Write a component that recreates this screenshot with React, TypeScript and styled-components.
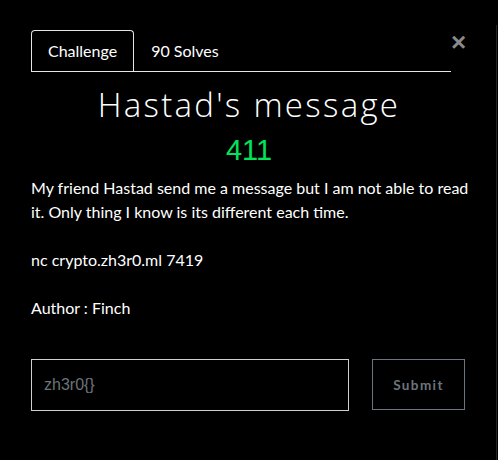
import React from "react";
import styled, { createGlobalStyle } from "styled-components";

const Global = createGlobalStyle`
  html, body { margin: 0; padding: 0; background: #000; }
  body { font-family: Lato, "Noto Sans", sans-serif; color: #fff; }
`;

const Page = styled.div`
  width: 498px;
  height: 460px;
  background: #000;
  overflow: hidden;
  padding-top: 25px;
  box-sizing: border-box;
`;

const Modal = styled.div`
  width: 497px;
  height: 435px;
  border-right: 1px solid #262626;
  box-sizing: border-box;
  padding: 5px 0 0 31px;
`;

const Header = styled.div`
  display: flex;
  align-items: flex-start;
  width: 436px;
`;

const Nav = styled.nav`
  display: flex;
  width: 420px;
  border-bottom: 1px solid #e6e6e6;
`;

const Tab = styled.div<{ $active?: boolean }>`
  box-sizing: border-box;
  height: 41px;
  padding: 8px 16px 0;
  font-size: 16px;
  line-height: 24px;
  color: #fff;
  border: 1px solid ${(p) => (p.$active ? "#e6e6e6" : "transparent")};
  border-bottom: 0;
  border-radius: 4px 4px 0 0;
`;

const Close = styled.button`
  padding: 0;
  margin-top: 1px;
  width: 14px;
  height: 22px;
  border: 0;
  background: none;
  color: #8a8a8a;
  font-family: "Liberation Sans", Arial, sans-serif;
  font-weight: 700;
  font-size: 26px;
  line-height: 22px;
  text-align: center;
`;

const Body = styled.div`
  width: 436px;
`;

const Title = styled.h3`
  margin: 13px 0 0;
  text-align: center;
  font-family: "Open Sans", sans-serif;
  font-weight: 300;
  font-size: 33px;
  letter-spacing: 2.3px;
  line-height: 40px;
  color: #fff;
`;

const Value = styled.div`
  margin-top: 7px;
  text-align: center;
  font-family: "Liberation Sans", Arial, sans-serif;
  font-size: 29px;
  line-height: 36px;
  color: #00e35b;
`;

const Description = styled.div`
  width: 450px;
  margin-top: 8px;
  font-size: 16px;
  line-height: 24px;
  color: #fff;
`;

const Form = styled.form`
  display: flex;
  gap: 23px;
  margin-top: 39px;
`;

const Input = styled.input`
  box-sizing: border-box;
  width: 318px;
  height: 52px;
  padding: 0 12px;
  background: #000;
  border: 1px solid #d0d0d0;
  border-radius: 0;
  color: #fff;
  font-family: "Liberation Sans", Arial, sans-serif;
  font-size: 16px;
  outline: none;
  &::placeholder { color: #6c737a; }
`;

const Submit = styled.button`
  box-sizing: border-box;
  width: 93px;
  height: 51px;
  background: #000;
  border: 1px solid #6c757d;
  border-radius: 0;
  color: #6c757d;
  font-family: Lato, sans-serif;
  font-weight: 700;
  font-size: 13.5px;
  letter-spacing: 1.4px;
  padding: 0;
`;

export default function App() {
  return (
    <>
      <Global />
      <Page>
        <Modal>
          <Header>
            <Nav>
              <Tab $active>Challenge</Tab>
              <Tab>90 Solves</Tab>
            </Nav>
            <Close type="button" aria-label="Close">×</Close>
          </Header>
          <Body>
            <Title>Hastad's message</Title>
            <Value>411</Value>
            <Description>
              My friend Hastad send me a message but I am not able to read it. Only thing I know is its different each time.
              <br />
              <br />
              nc crypto.zh3r0.ml 7419
              <br />
              <br />
              Author : Finch
            </Description>
            <Form onSubmit={(e) => e.preventDefault()}>
              <Input placeholder="zh3r0{}" />
              <Submit type="submit">Submit</Submit>
            </Form>
          </Body>
        </Modal>
      </Page>
    </>
  );
}
